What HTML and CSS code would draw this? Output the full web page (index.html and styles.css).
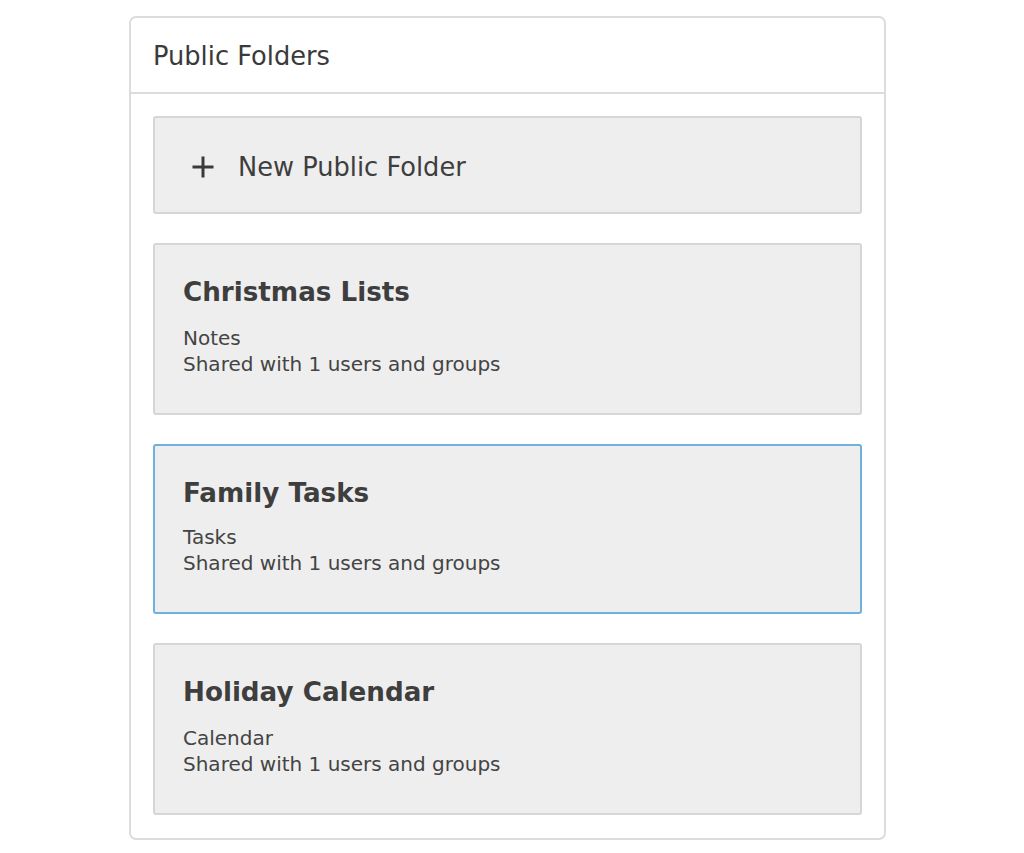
FILE: index.html
```html
<!DOCTYPE html>
<html>
<head>
<meta charset="utf-8">
<link rel="stylesheet" href="styles.css">
</head>
<body>
<div class="panel">
  <div class="panel-header">Public Folders</div>
  <div class="panel-body">
    <div class="new-folder">
      <svg class="plus" width="24" height="24" viewBox="0 0 24 24"><path d="M12 1.5v21M1.5 12h21" stroke="#3a3a3a" stroke-width="3" fill="none"/></svg>
      <span>New Public Folder</span>
    </div>
    <div class="card">
      <div class="card-title">Christmas Lists</div>
      <div class="card-sub">Notes</div>
      <div class="card-sub">Shared with 1 users and groups</div>
    </div>
    <div class="card selected">
      <div class="card-title">Family Tasks</div>
      <div class="card-sub">Tasks</div>
      <div class="card-sub">Shared with 1 users and groups</div>
    </div>
    <div class="card">
      <div class="card-title">Holiday Calendar</div>
      <div class="card-sub">Calendar</div>
      <div class="card-sub">Shared with 1 users and groups</div>
    </div>
  </div>
</div>
</body>
</html>
```
FILE: styles.css
```css
* { box-sizing: border-box; }
html, body { margin: 0; padding: 0; background: #fff; }
body {
  font-family: "DejaVu Sans", "Open Sans", sans-serif;
  color: #3c3c3c;
  padding: 16px 0 0 129px;
}
.panel {
  width: 757px;
  height: 824px;
  border: 2px solid #dcdcdc;
  border-radius: 7px;
  background: #fff;
}
.panel-header {
  height: 76px;
  border-bottom: 2px solid #dcdcdc;
  display: flex;
  align-items: center;
  padding-left: 22px;
  padding-top: 2px;
  font-size: 25.7px;
  color: #3a3a3a;
}
.panel-body {
  padding: 22px 22px 0 22px;
  display: flex;
  flex-direction: column;
  gap: 29px;
}
.new-folder {
  height: 98px;
  background: #eeeeee;
  border: 2px solid #d6d6d6;
  border-radius: 3px;
  display: flex;
  align-items: center;
  padding-left: 36px;
  padding-top: 4px;
  font-size: 25.7px;
  color: #3e3e3e;
}
.new-folder .plus { margin-right: 23px; margin-top: -1px; }
.card {
  height: 172px;
  background: #eeeeee;
  border: 2px solid #d6d6d6;
  border-radius: 3px;
  padding: 30px 28px 0 28px;
}
.card.selected { border-color: #6cb2dc; height: 170px; }
.card-title {
  font-size: 26.2px;
  font-weight: bold;
  color: #3e3e3e;
  line-height: 34px;
  margin-bottom: 16px;
}
.card.selected .card-title { margin-bottom: 14px; }
.card-sub {
  font-size: 20px;
  line-height: 26px;
  color: #444;
}
```
